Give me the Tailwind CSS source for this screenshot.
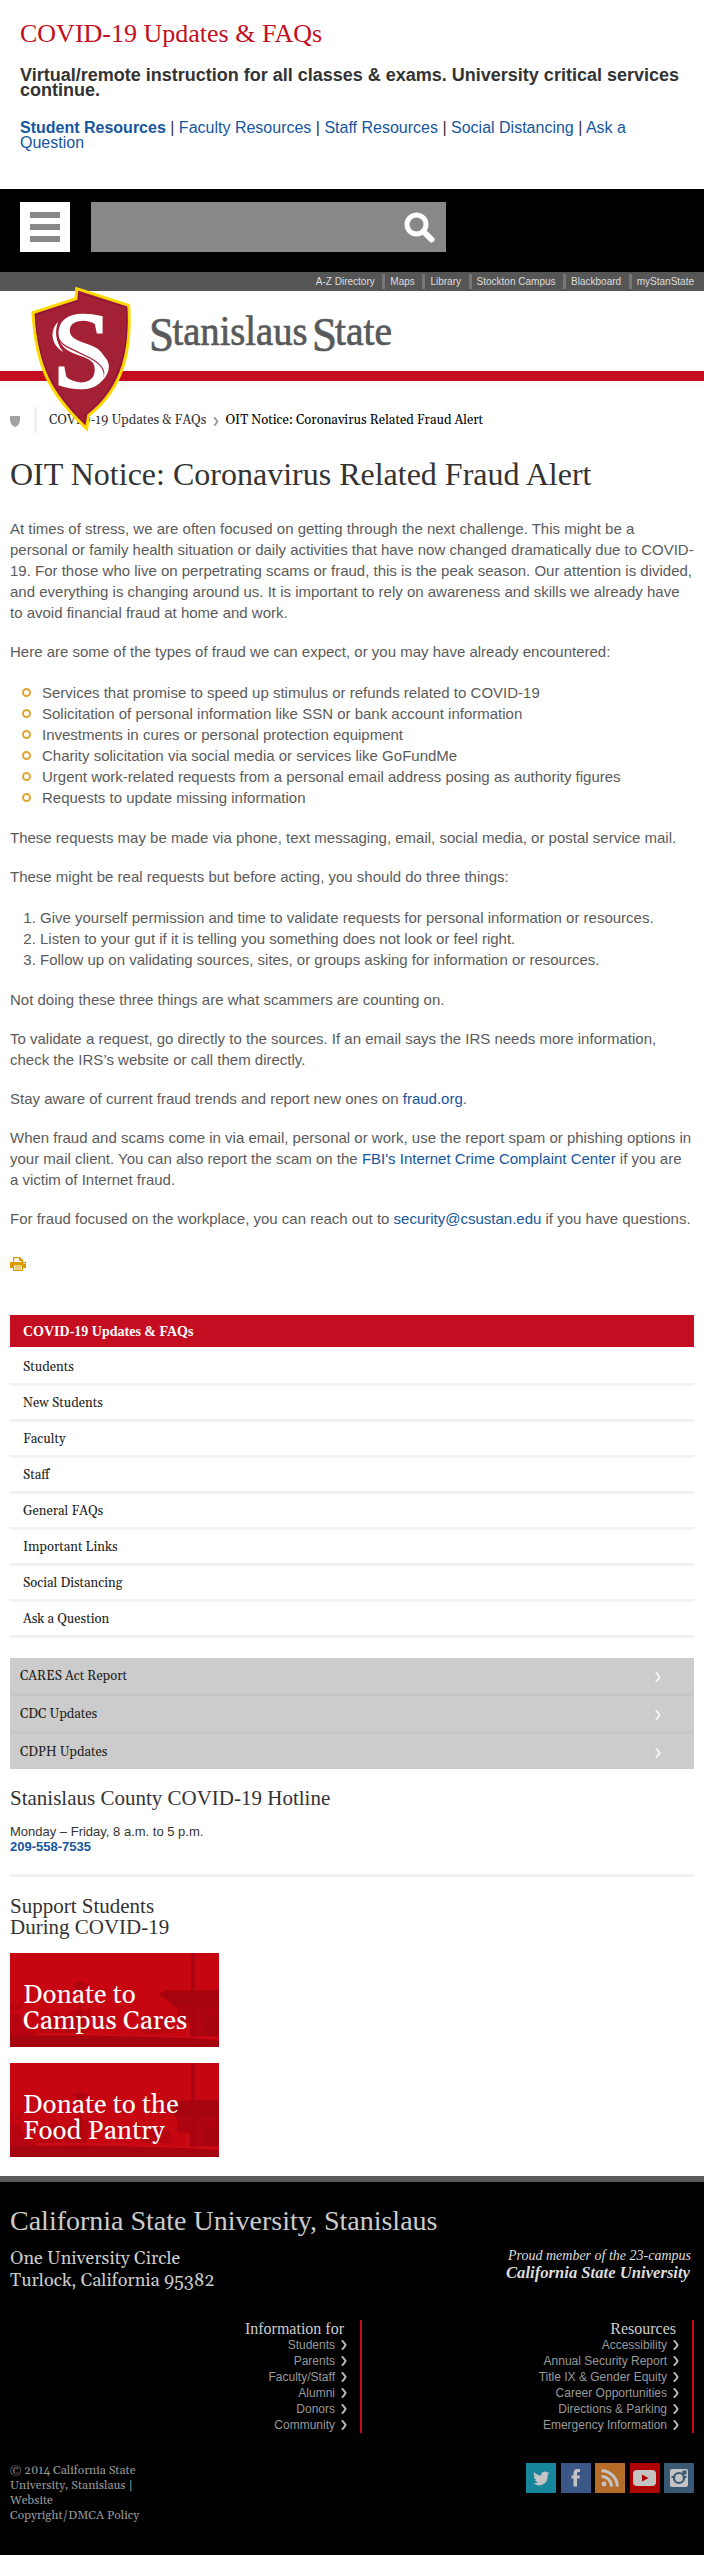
<!DOCTYPE html>
<html lang="en">
<head>
<meta charset="utf-8">
<title>OIT Notice: Coronavirus Related Fraud Alert</title>
<script src="https://cdn.jsdelivr.net/npm/@tailwindcss/browser@4"></script>
</head>
<body class="w-[704px] bg-white font-['Liberation_Sans',Arial,sans-serif] text-[#333]">

<svg class="hidden">
  <symbol id="chev" viewBox="0 0 6 10"><path d="M.8 .3Q3.200 2.500 4.600 5 3.200 7.500 .8 9.700" fill="none" stroke="currentColor" stroke-width="1.900"/></symbol>
  <symbol id="campus" viewBox="0 0 209 94" preserveAspectRatio="none">
    <rect width="209" height="94" fill="#c60610"/>
    <g fill="#a6040f">
      <path d="M0 83 60 82 120 82 209 87V94H0ZM149 41 160 36V38L209 37V53L165 54Z"/>
      <path d="M167 53H209V81H193V84H176V70L167 69Z" opacity=".8"/>
      <path d="M193 64H209V83H193Z"/>
      <path d="M181 0H185V94H181Z" opacity=".8"/>
      <path d="M62 32 68 29H72L78 32V33H62ZM65 33H75L73 41H68ZM69 41H71.500V94H69Z" opacity=".7"/>
      <path d="M54 82 55 64 60 60 67 56 72 58 82 55 79 66 76 82ZM28 80 34 68 46 58 50 64 52 80ZM0 60 4 63 10 60 12 70 22 72 26 82 34 86 30 94H0ZM130 74 142 64 148 66 158 66 164 80H132Z" opacity=".5"/>
      <path d="M0 52 5 48 3 58ZM5 56 12 47 10 56Z" opacity=".6"/>
    </g>
    <path d="M176 70H180V84H176ZM28 80H80L176 83 200 84 206 86 176 85 80 82.500H28Z" fill="#ce0c18" opacity=".8"/>
  </symbol>
</svg>

<section class="h-[189px] px-5 pt-[21px]">
  <h2 class="font-['Liberation_Serif',serif] text-[26px] leading-[26px] text-[#c40d20]">COVID-19 Updates &amp; FAQs</h2>
  <p class="mt-[21px] text-[18px] leading-[15px] font-bold">Virtual/remote instruction for all classes &amp; exams. University critical services continue.</p>
  <p class="mt-[22px] w-[620px] text-[16px] leading-[15px] text-[#333]"><a class="font-bold text-[#15569f]">Student Resources</a> | <a class="text-[#15569f]">Faculty Resources</a> | <a class="text-[#15569f]">Staff Resources</a> | <a class="text-[#15569f]">Social Distancing</a> | <a class="text-[#15569f]">Ask a Question</a></p>
</section>

<div class="flex h-[83px] bg-black px-5 pt-[13px]">
  <button class="flex size-[50px] flex-col items-center justify-center gap-[6px] bg-white">
    <span class="h-[6px] w-[30px] bg-[#888]"></span><span class="h-[6px] w-[30px] bg-[#888]"></span><span class="h-[6px] w-[30px] bg-[#888]"></span>
  </button>
  <div class="ml-[21px] flex h-[50px] w-[355px] items-center justify-end bg-[#888] pr-[11px]">
    <svg class="size-[31px]" viewBox="0 0 31 31" fill="none" stroke="#fff"><circle cx="12.500" cy="12.500" r="9.500" stroke-width="5"/><path d="M20 20 27.500 27.500" stroke-width="6" stroke-linecap="round"/></svg>
  </div>
</div>

<header class="relative">
  <nav class="flex h-[19px] justify-end bg-[#555] pt-[2px] pr-[10px] text-[10px] leading-[15px] text-[#ddd]">
    <a class="pr-[7.6px]">A-Z Directory</a>
    <a class="h-[15px] border-l-[3px] border-[#777] pr-[7.6px] pl-[5px]">Maps</a>
    <a class="h-[15px] border-l-[3px] border-[#777] pr-[7.6px] pl-[5px]">Library</a>
    <a class="h-[15px] border-l-[3px] border-[#777] pr-[7.6px] pl-[5px]">Stockton Campus</a>
    <a class="h-[15px] border-l-[3px] border-[#777] pr-[7.6px] pl-[5px]">Blackboard</a>
    <a class="h-[15px] border-l-[3px] border-[#777] pl-[5px]">myStanState</a>
  </nav>
  <div class="h-[80px] pt-[17px] pl-[150px]">
    <svg class="h-[50px] w-[250px]" viewBox="0 0 250 50" font-family="'Liberation Serif',serif" font-size="42" fill="#58595b" stroke="#58595b" stroke-width=".7">
      <text x="-1" y="43" font-size="48" textLength="25" lengthAdjust="spacingAndGlyphs">S</text>
      <text x="22.500" y="37" textLength="135" lengthAdjust="spacingAndGlyphs">tanislaus</text>
      <text x="162" y="43" font-size="48" textLength="25" lengthAdjust="spacingAndGlyphs">S</text>
      <text x="185" y="37" textLength="57" lengthAdjust="spacingAndGlyphs">tate</text>
    </svg>
  </div>
  <div class="h-[10px] bg-[#c40d20]"></div>
  <div class="h-[15px] bg-gradient-to-b from-[#fafafa] to-white"></div>
  <svg class="absolute top-[14px] left-[30px] z-10 h-[146px] w-[102px]" viewBox="90 48 306 438">
    <path d="M230 56 386 106C394 230 376 350 266 436L260 476 252 468C150 370 108 290 99 128L228 86Z" fill="#a32035" stroke="#fdd900" stroke-width="9"/>
    <path d="M237 69 380 112C386 225 368 345 258 432L253 460C160 366 114 280 106 134L236 92Z" fill="none" stroke="#8a0f45" stroke-width="3"/>
    <text x="158" y="351" font-family="'Liberation Serif',serif" font-size="324" textLength="176" lengthAdjust="spacingAndGlyphs" fill="#fff" stroke="#fff" stroke-width="8">S</text>
    <path d="M180 158C164 190 172 214 200 230L270 264C308 284 320 306 310 336" fill="none" stroke="#a32035" stroke-width="4"/>
    <path d="M174 155C150 180 150 222 190 246C166 214 164 186 174 155ZM304 252C334 272 334 304 306 334C318 304 320 278 304 252Z" fill="#fff"/>
  </svg>
</header>

<main class="px-[10px]">
  <div class="mt-[11px] flex h-[26px] items-center font-[Gelasio,Georgia,'Liberation_Serif',serif] text-[13px]">
    <svg class="mt-[3px] h-[11px] w-[10px]" viewBox="0 0 10 11"><path d="M0 0H10V4C10 7 8 10 5 11 2 10 0 7 0 4Z" fill="#a3a3a3"/></svg>
    <span class="ml-[14px] h-[26px] w-[3px] bg-[#f2f2f2]"></span>
    <a class="ml-[12px] pt-[2px]">COVID-19 Updates &amp; FAQs</a>
    <svg class="ml-[7px] mr-[6px] mt-[2px] h-[9px] w-[6px] text-[#999]"><use href="#chev"/></svg>
    <span class="pt-[2px] text-black">OIT Notice: Coronavirus Related Fraud Alert</span>
  </div>
  <h1 class="mt-[21px] font-['Liberation_Serif',serif] text-[32px] leading-[40px]">OIT Notice: Coronavirus Related Fraud Alert</h1>

  <article class="mt-[24px] h-[739px] text-[15px] leading-[21px] text-[#5b5b5b]">
    <p>At times of stress, we are often focused on getting through the next challenge. This might be a<br>personal or family health situation or daily activities that have now changed dramatically due to COVID-<br>19. For those who live on perpetrating scams or fraud, this is the peak season. Our attention is divided,<br>and everything is changing around us. It is important to rely on awareness and skills we already have<br>to avoid financial fraud at home and work.</p>
    <p class="mt-[18px]">Here are some of the types of fraud we can expect, or you may have already encountered:</p>
    <ul class="mt-5 pl-3">
      <li class="flex items-center gap-[11px]"><i class="size-[9px] rounded-full border-2 border-[#e0a52d]"></i>Services that promise to speed up stimulus or refunds related to COVID-19</li>
      <li class="flex items-center gap-[11px]"><i class="size-[9px] rounded-full border-2 border-[#e0a52d]"></i>Solicitation of personal information like SSN or bank account information</li>
      <li class="flex items-center gap-[11px]"><i class="size-[9px] rounded-full border-2 border-[#e0a52d]"></i>Investments in cures or personal protection equipment</li>
      <li class="flex items-center gap-[11px]"><i class="size-[9px] rounded-full border-2 border-[#e0a52d]"></i>Charity solicitation via social media or services like GoFundMe</li>
      <li class="flex items-center gap-[11px]"><i class="size-[9px] rounded-full border-2 border-[#e0a52d]"></i>Urgent work-related requests from a personal email address posing as authority figures</li>
      <li class="flex items-center gap-[11px]"><i class="size-[9px] rounded-full border-2 border-[#e0a52d]"></i>Requests to update missing information</li>
    </ul>
    <p class="mt-[19px]">These requests may be made via phone, text messaging, email, social media, or postal service mail.</p>
    <p class="mt-[18px]">These might be real requests but before acting, you should do three things:</p>
    <ol class="mt-5 list-decimal pl-[30px]">
      <li>Give yourself permission and time to validate requests for personal information or resources.</li>
      <li>Listen to your gut if it is telling you something does not look or feel right.</li>
      <li>Follow up on validating sources, sites, or groups asking for information or resources.</li>
    </ol>
    <p class="mt-[19px]">Not doing these three things are what scammers are counting on.</p>
    <p class="mt-[18px]">To validate a request, go directly to the sources. If an email says the IRS needs more information,<br>check the IRS’s website or call them directly.</p>
    <p class="mt-[18px]">Stay aware of current fraud trends and report new ones on <a class="text-[#15569f]">fraud.org</a>.</p>
    <p class="mt-[18px]">When fraud and scams come in via email, personal or work, use the report spam or phishing options in<br>your mail client. You can also report the scam on the <a class="text-[#15569f]">FBI's Internet Crime Complaint Center</a> if you are<br>a victim of Internet fraud.</p>
    <p class="mt-[18px]">For fraud focused on the workplace, you can reach out to <a class="text-[#15569f]">security@csustan.edu</a> if you have questions.</p>
  </article>
  <svg class="block h-[14px] w-4" viewBox="0 0 16 14" fill="#d99a00"><path d="M3 0H10L13 3V5H3Z"/><path d="M4.200 1.200H9V4H11.500V5H4.200Z" fill="#fff"/><path d="M9 0 13 4H9Z"/><path d="M0 5H16V11H0Z"/><path d="M3 8H13V14H3Z"/><path d="M4.200 8.500H11.800V13H4.200Z" fill="#fff"/><path d="M5 9.500H11V10.500H5ZM5 11.500H11V12.500H5Z"/><path d="M13.500 6H15V7H13.500Z" fill="#fff"/></svg>

  <nav class="mt-[44px] font-[Gelasio,Georgia,'Liberation_Serif',serif] text-[13px] text-[#222]">
    <div class="flex h-8 items-center bg-[#c40d20] pt-px pl-[13px] font-['Liberation_Serif',serif] text-[14px] font-bold text-white">COVID-19 Updates &amp; FAQs</div>
    <a class="mt-[3px] flex h-9 items-center border-b-[3px] border-[#f3f3f3] pt-[2px] pl-[13px]">Students</a>
    <a class="flex h-9 items-center border-b-[3px] border-[#f3f3f3] pt-[2px] pl-[13px]">New Students</a>
    <a class="flex h-9 items-center border-b-[3px] border-[#f3f3f3] pt-[2px] pl-[13px]">Faculty</a>
    <a class="flex h-9 items-center border-b-[3px] border-[#f3f3f3] pt-[2px] pl-[13px]">Staff</a>
    <a class="flex h-9 items-center border-b-[3px] border-[#f3f3f3] pt-[2px] pl-[13px]">General FAQs</a>
    <a class="flex h-9 items-center border-b-[3px] border-[#f3f3f3] pt-[2px] pl-[13px]">Important Links</a>
    <a class="flex h-9 items-center border-b-[3px] border-[#f3f3f3] pt-[2px] pl-[13px]">Social Distancing</a>
    <a class="flex h-9 items-center border-b-[3px] border-[#f3f3f3] pt-[2px] pl-[13px]">Ask a Question</a>
  </nav>

  <nav class="mt-5 bg-[#ccc] font-[Gelasio,Georgia,'Liberation_Serif',serif] text-[13px] text-[#222]">
    <a class="flex h-[38px] items-center justify-between border-b-[3px] border-[#c6c6c6] pt-[2px] pr-[33px] pl-[10px]">CARES Act Report<svg class="h-[10px] w-[6px] text-[#f5f5f5]"><use href="#chev"/></svg></a>
    <a class="flex h-[38px] items-center justify-between border-b-[3px] border-[#c6c6c6] pt-[2px] pr-[33px] pl-[10px]">CDC Updates<svg class="h-[10px] w-[6px] text-[#f5f5f5]"><use href="#chev"/></svg></a>
    <a class="flex h-[35px] items-center justify-between pt-[2px] pr-[33px] pl-[10px]">CDPH Updates<svg class="h-[10px] w-[6px] text-[#f5f5f5]"><use href="#chev"/></svg></a>
  </nav>

  <section class="h-[108px] border-b-[3px] border-[#f2f2f2] pt-[19px]">
    <h3 class="font-['Liberation_Serif',serif] text-[21px] leading-[21px]">Stanislaus County COVID-19 Hotline</h3>
    <p class="mt-[15px] text-[13px] leading-[15px]">Monday – Friday, 8 a.m. to 5 p.m.<br><a class="font-bold text-[#15569f]">209-558-7535</a></p>
  </section>

  <section class="h-[299px] pt-[19px]">
    <h3 class="font-['Liberation_Serif',serif] text-[21px] leading-[21px]">Support Students<br>During COVID-19</h3>
    <a class="relative mt-[15px] block h-[94px] w-[209px] pt-[30px] pl-[13px] font-[Gelasio,Georgia,serif] text-[26px] leading-[26px] text-white"><svg class="absolute inset-0 size-full"><use href="#campus"/></svg><span class="relative">Donate to<br>Campus Cares</span></a>
    <a class="relative mt-4 block h-[94px] w-[209px] pt-[30px] pl-[13px] font-[Gelasio,Georgia,serif] text-[26px] leading-[26px] text-white"><svg class="absolute inset-0 size-full"><use href="#campus"/></svg><span class="relative">Donate to the<br>Food Pantry</span></a>
  </section>
</main>

<footer class="h-[379px] border-t-[6px] border-[#5a5a5a] bg-black px-[10px] pt-[21px] font-[Gelasio,Georgia,'Liberation_Serif',serif] text-[#ccc]">
  <h2 class="font-['Liberation_Serif',serif] text-[28px] leading-[36px]">California State University, Stanislaus</h2>
  <div class="mt-[9px] flex justify-between">
    <p class="text-[18px] leading-[22px]">One University Circle<br>Turlock, California 95382</p>
    <svg class="mt-[-5px] h-[44px] w-[190px]" viewBox="0 0 190 44" fill="#ddd" font-family="'Liberation Serif',serif" font-style="italic"><text x="4" y="17" font-size="14.500" textLength="183" lengthAdjust="spacingAndGlyphs">Proud member of the 23-campus</text><text x="2" y="34.500" font-size="16.500" font-weight="bold" textLength="184" lengthAdjust="spacingAndGlyphs">California State University</text></svg>
  </div>
  <div class="mt-[28px] flex justify-between">
    <div class="h-[113px] w-[352px] border-r-2 border-[#c40d20] pr-[13px] text-right">
      <h4 class="pr-[3px] font-['Liberation_Serif',serif] text-[16px] leading-[17px]">Information for</h4>
      <ul class="font-['Liberation_Sans',sans-serif] text-[12px] leading-4 text-[#999]">
        <li class="flex items-center justify-end gap-[6px]">Students<svg class="h-[10px] w-[6px] text-[#bbb]"><use href="#chev"/></svg></li>
        <li class="flex items-center justify-end gap-[6px]">Parents<svg class="h-[10px] w-[6px] text-[#bbb]"><use href="#chev"/></svg></li>
        <li class="flex items-center justify-end gap-[6px]">Faculty/Staff<svg class="h-[10px] w-[6px] text-[#bbb]"><use href="#chev"/></svg></li>
        <li class="flex items-center justify-end gap-[6px]">Alumni<svg class="h-[10px] w-[6px] text-[#bbb]"><use href="#chev"/></svg></li>
        <li class="flex items-center justify-end gap-[6px]">Donors<svg class="h-[10px] w-[6px] text-[#bbb]"><use href="#chev"/></svg></li>
        <li class="flex items-center justify-end gap-[6px]">Community<svg class="h-[10px] w-[6px] text-[#bbb]"><use href="#chev"/></svg></li>
      </ul>
    </div>
    <div class="h-[113px] border-r-2 border-[#c40d20] pr-[13px] text-right">
      <h4 class="pr-[3px] font-['Liberation_Serif',serif] text-[16px] leading-[17px]">Resources</h4>
      <ul class="font-['Liberation_Sans',sans-serif] text-[12px] leading-4 text-[#999]">
        <li class="flex items-center justify-end gap-[6px]">Accessibility<svg class="h-[10px] w-[6px] text-[#bbb]"><use href="#chev"/></svg></li>
        <li class="flex items-center justify-end gap-[6px]">Annual Security Report<svg class="h-[10px] w-[6px] text-[#bbb]"><use href="#chev"/></svg></li>
        <li class="flex items-center justify-end gap-[6px]">Title IX &amp; Gender Equity<svg class="h-[10px] w-[6px] text-[#bbb]"><use href="#chev"/></svg></li>
        <li class="flex items-center justify-end gap-[6px]">Career Opportunities<svg class="h-[10px] w-[6px] text-[#bbb]"><use href="#chev"/></svg></li>
        <li class="flex items-center justify-end gap-[6px]">Directions &amp; Parking<svg class="h-[10px] w-[6px] text-[#bbb]"><use href="#chev"/></svg></li>
        <li class="flex items-center justify-end gap-[6px]">Emergency Information<svg class="h-[10px] w-[6px] text-[#bbb]"><use href="#chev"/></svg></li>
      </ul>
    </div>
  </div>
  <div class="mt-[30px] flex justify-between">
    <p class="text-[12px] leading-[15px] text-[#999]">© 2014 California State<br>University, Stanislaus |<br>Website<br>Copyright/DMCA Policy</p>
    <div class="grid grid-cols-[30px_30px_30px_30px_30px] gap-x-[4.5px]">
      <svg class="size-[30px] bg-[#16869c]" viewBox="0 0 30 30"><path d="M23.500 10q-.9.500-2 .6 1.100-.8 1.400-1.800-1 .6-2 .8a3.400 3.400 0 0 0-5.800 3q-4.300-.2-7-3.500-1.200 2.700 1 4.600-.8 0-1.500-.4 0 2.600 2.700 3.400-.8.200-1.500 0 .8 2.200 3.200 2.400-2 1.700-5 1.500 7 3.800 12-.5 3-3 2.700-8 1-.7 1.800-2.100Z" fill="#c4c4c4"/></svg>
      <svg class="size-[30px] bg-[#3b5787]" viewBox="0 0 30 30"><path d="M12.500 23.500V15.500H10.500V12.500H12.500V10.500Q12.500 6 16.500 6H19V9H17.300Q16 9 16 10.500V12.500H19L18.600 15.500H16V23.500Z" fill="#c4c4c4"/></svg>
      <svg class="size-[30px] bg-[#b56c28]" viewBox="0 0 30 30"><circle cx="9" cy="21" r="2.400" fill="#c4c4c4"/><path d="M6.500 13.500A10 10 0 0 1 16.500 23.500M6.500 7.700A16 16 0 0 1 22.300 23.500" fill="none" stroke="#c4c4c4" stroke-width="3"/></svg>
      <svg class="size-[30px] bg-[#b00004]" viewBox="0 0 30 30"><rect x="3" y="7" width="23" height="16" rx="4" fill="#c4c4c4"/><path d="M12 11.500 18.500 15 12 18.500Z" fill="#b00004"/></svg>
      <svg class="size-[30px] bg-[#395874]" viewBox="0 0 30 30"><rect x="6" y="6" width="18" height="18" rx="2" fill="#c4c4c4"/><circle cx="15" cy="15" r="5" fill="none" stroke="#395874" stroke-width="2.200"/><rect x="18.500" y="7.500" width="4" height="4" fill="#395874"/><path d="M7.500 13H10V15H7.500ZM20 13H22.500V15H20Z" fill="#395874"/></svg>
    </div>
  </div>
</footer>
</body>
</html>
